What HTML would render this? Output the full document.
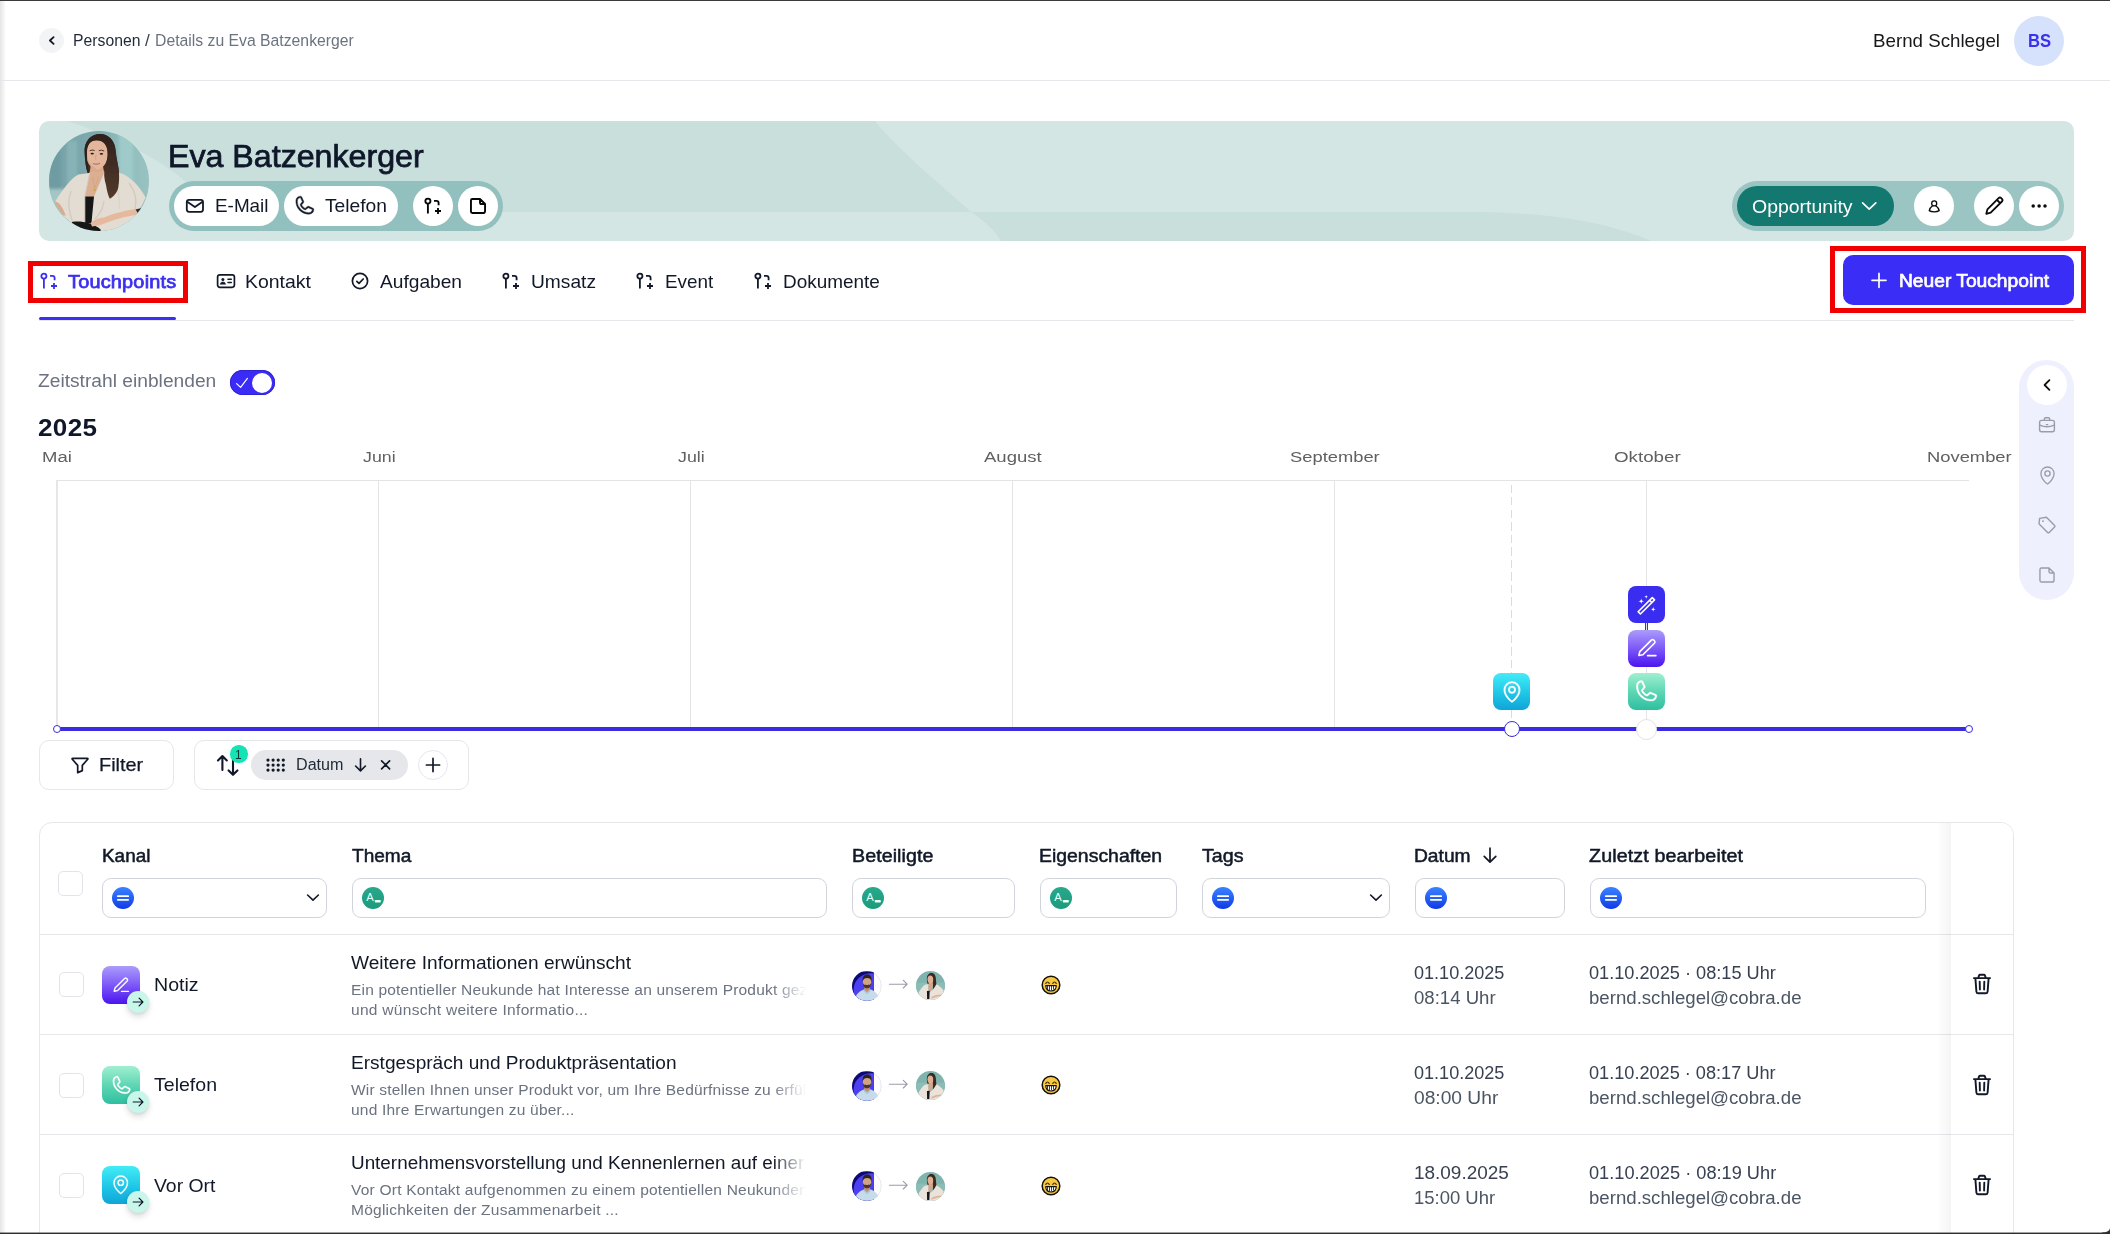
<!DOCTYPE html>
<html lang="de"><head><meta charset="utf-8"><title>Details zu Eva Batzenkerger</title>
<style>
*{box-sizing:border-box;margin:0;padding:0}
html,body{width:2110px;height:1234px;overflow:hidden;background:#fff}
body{position:relative;font-family:"Liberation Sans",sans-serif;color:#111827}
.a{position:absolute;display:block}
.t{position:absolute;white-space:nowrap;display:block}
.box{position:absolute;border:1px solid #e5e7eb;background:#fff}
.inp{position:absolute;border:1px solid #d1d5db;background:#fff;border-radius:9px;height:40px;top:878px}
.circ{position:absolute;border-radius:50%}
.cb{position:absolute;width:25px;height:25px;border:1px solid #e2e4e9;border-radius:5px;background:#fff}
.hl{position:absolute;height:1px;background:#e5e7eb}
.ic{position:absolute;border-radius:8px}
</style></head><body>
<div class="a" style="left:0;top:0;width:2110px;height:1px;background:#3a3a3a"></div>
<div class="a" style="left:0;top:1px;width:6px;height:1233px;background:linear-gradient(90deg,#e4e4e4,#fff)"></div>
<div class="hl" style="left:0;top:80px;width:2110px;background:#e5e7eb"></div>
<div class="circ" style="left:39px;top:28px;width:25px;height:25px;background:#f3f4f6"></div>
<svg class="a" style="left:39px;top:28px;" width="25" height="25" viewBox="0 0 25 25" fill="none" stroke-linecap="round" stroke-linejoin="round"><path d="M14.6 9.1 L10.9 12.5 L14.6 15.9" stroke="#111827" stroke-width="1.8"/></svg>
<span class="t" style="left:73.0px;top:33.00px;font-size:15.91px;line-height:15.91px;color:#1f2937;font-weight:400;transform-origin:0 0;transform:scaleX(0.9913)">Personen</span>
<span class="t" style="left:144.5px;top:33.00px;font-size:15.91px;line-height:15.91px;color:#374151;font-weight:400;transform-origin:0 0;transform:scaleX(1.075);letter-spacing:1.904px">/</span>
<span class="t" style="left:155.0px;top:33.00px;font-size:15.91px;line-height:15.91px;color:#6b7280;font-weight:400;transform-origin:0 0;transform:scaleX(0.9905)">Details zu Eva Batzenkerger</span>
<span class="t" style="left:1872.5px;top:32.00px;font-size:18.72px;line-height:18.72px;color:#18181b;font-weight:400;transform-origin:0 0;transform:scaleX(1.0011)">Bernd Schlegel</span>
<div class="circ" style="left:2014px;top:16px;width:50px;height:50px;background:#d6e2fb"></div>
<span class="t" style="left:2027.5px;top:33.01px;font-size:17.68px;line-height:17.68px;color:#3b2ff0;font-weight:700;transform-origin:0 0;transform:scaleX(0.9405)">BS</span>
<div class="a" style="left:39px;top:121px;width:2035px;height:120px;border-radius:10px;overflow:hidden;background:#d3e6e4">
<svg class="a" style="left:0;top:0" width="2035" height="120" viewBox="0 0 2035 120">
<path d="M28 0 H836 C860 30 900 62 932 91 H172 C150 52 95 22 28 0 Z" fill="#c8dfdc"/>
<path d="M932 91 H1440 C1520 92 1575 104 1612 120 H962 C956 110 946 100 932 91 Z" fill="#c8dfdc"/>
</svg></div>
<svg class="a" style="left:49px;top:131px;border-radius:50%" width="100" height="100" viewBox="0 0 100 100">
<defs><linearGradient id="bg1" x1="0" y1="0" x2="1" y2="0"><stop offset="0" stop-color="#76a2a8"/><stop offset=".5" stop-color="#7eaaae"/><stop offset=".72" stop-color="#8fbcbc"/><stop offset="1" stop-color="#98c2c1"/></linearGradient>
<linearGradient id="hr" x1="0" y1="0" x2="0" y2="1"><stop offset="0" stop-color="#2f211c"/><stop offset="1" stop-color="#54392b"/></linearGradient>
<filter id="bl" x="-10%" y="-10%" width="120%" height="120%"><feGaussianBlur stdDeviation="0.6"/></filter>
<filter id="bl3" x="-10%" y="-10%" width="120%" height="120%"><feGaussianBlur stdDeviation="1.6"/></filter></defs>
<rect width="100" height="100" fill="url(#bg1)"/>
<g filter="url(#bl3)">
<rect x="70" y="0" width="14" height="60" fill="#a7d2d0" opacity=".6"/>
<rect x="18" y="10" width="10" height="50" fill="#8db9bb" opacity=".7"/>
<rect x="0" y="20" width="12" height="40" fill="#6a979e" opacity=".6"/>
<rect x="-5" y="58" width="60" height="50" fill="#a9cac8" opacity=".9"/>
<rect x="55" y="60" width="50" height="50" fill="#9ac1bf" opacity=".8"/>
</g>
<g filter="url(#bl)">
<path d="M35.6 21 C35 10 42 3 50.7 3.1 C60 3.2 66 10 66.6 20 C67 30 70.5 36 70 44 C69.6 52 70 56 68.6 60 C66 66 62 69 60.6 67.6 C57 60 55 50 55 42 L38.6 42 C36.6 36 35.8 28 35.6 21Z" fill="url(#hr)"/>
<path d="M42 33 L53.6 33 L56 46 L47.5 67 L40 66 L40 46 Z" fill="#d9a98c"/>
<path d="M37.3 24 C36.8 14 41 9.5 47.5 9.5 C54.5 9.5 58.8 14 58.6 24 C58.4 32 53.5 38.6 47.6 38.6 C42.5 38.6 37.8 32 37.3 24Z" fill="#e4b79c"/>
<path d="M45.6 5.6 C38 7.6 35 14 35.7 22 C36 28 36.6 36 38.6 42 L40 41 C38.4 34 38 27 38 21 C38.2 14 41 10 46.4 8.4Z" fill="#2f211c"/>
<path d="M29.4 43.6 C22 47 12 61 6.2 70.8 C9 76 13 82 15.6 86 L21 90.6 L23 101 L92 101 C91.4 92 91.6 84 90.6 77.8 C93 74 95 70 96.6 66.4 C90 54 81 45.6 72 42.2 L56 40.6 L40.6 42 Z" fill="#e3dcd3"/>
<path d="M22 60 C18 70 20 82 24 92 M80 52 C86 60 88 70 86 78 M55 70 C54 78 50 84 46 88" stroke="#cfc7bc" stroke-width="1.4" fill="none" opacity=".8"/>
<path d="M40.8 41.6 L55.6 40.4 L45 65.8 L35.8 65.8 Z" fill="#dcae92"/>
<path d="M35.8 65.6 L45 65.4 L42.4 92.4 L35.8 92.4 Z" fill="#141418"/>
<path d="M40.8 41.6 L35.8 65.8 L35.8 92" stroke="#d2cabf" stroke-width="1" fill="none"/>
<path d="M66 52 C70 60 71 68 70 78" stroke="#d8d1c7" stroke-width="1.1" fill="none"/>
<path d="M44 7.2 C50 6 57 10 58.6 19 C59.4 25 58 30 56 36 C54.6 41 55 48 57 54 C58 60 59 64 60.8 67.8 C64 66 68 62 69.2 57 C70.4 50 70.4 44 69.6 38 C68.6 31 67.4 26 66.6 19 C65.6 9 59 3 50.7 3.1 C47 3.2 45 5 44 7.2Z" fill="url(#hr)"/>
<path d="M23 91 C31 89.6 44 91.6 51.6 98.6 L52 104 L20 104Z" fill="#141418"/>
<path d="M90.6 77.6 C80 78.6 66 82 55 86.4 C50 86.6 45 88.6 41.6 92 L43 95.4 L50 94.6 L56.6 92 C68 87.6 80 84.6 90 83.4 Z" fill="#e6b99e"/>
<path d="M6.2 70.8 C9.6 70.4 14 76 16.8 85 L13.4 83.4 C11 79.6 8 75.6 6.2 72.6Z" fill="#dcaa8e"/>
<path d="M86.6 78.4 L95 76.4 L93 82.6 L89.6 83.4Z" fill="#2b3034"/>
<ellipse cx="43.2" cy="22.6" rx="1.7" ry=".9" fill="#2a1c18"/><ellipse cx="52.4" cy="22.8" rx="1.8" ry=".9" fill="#2a1c18"/>
<path d="M40.6 19.8 q2.4 -1.4 5 -.3 M49.8 19.7 q2.8 -1.3 5.4 .4" stroke="#3a2a22" stroke-width=".9" fill="none"/>
<path d="M38.4 28 q2 7 8.6 10.2" stroke="#d2a184" stroke-width="1.2" fill="none" opacity=".7"/>
<path d="M43.8 32.4 q3.6 1.6 7.2 -.2" stroke="#b9706a" stroke-width="1.1" fill="none"/>
<path d="M47 24 q-.8 3 -.2 4.6" stroke="#cf9c80" stroke-width=".8" fill="none"/>
<path d="M43.6 46 L45.6 58 L49.6 46" stroke="#c9a064" stroke-width=".5" fill="none"/>
<circle cx="45.6" cy="59" r="1" fill="#c9a23a"/>
</g></svg>
<span class="t" style="left:167.9px;top:141.01px;font-size:31.51px;line-height:31.51px;color:#0f172a;font-weight:400;-webkit-text-stroke:0.75px #0f172a;transform-origin:0 0;transform:scaleX(1.0212)">Eva Batzenkerger</span>
<div class="a" style="left:169px;top:181px;width:334px;height:50px;border-radius:25px;background:#92c0be"></div>
<div class="a" style="left:174px;top:186px;width:105px;height:40px;border-radius:20px;background:#fff"></div>
<div class="a" style="left:284px;top:186px;width:114px;height:40px;border-radius:20px;background:#fff"></div>
<div class="circ" style="left:413px;top:186px;width:40px;height:40px;background:#fff"></div>
<div class="circ" style="left:458px;top:186px;width:40px;height:40px;background:#fff"></div>
<svg class="a" style="left:184px;top:196px;" width="22" height="20" viewBox="0 0 22 20" fill="none" stroke-linecap="round" stroke-linejoin="round"><rect x="2.8" y="3.9" width="16.2" height="11.9" rx="2.2" stroke="#111827" stroke-width="1.8"/><path d="M3.6 6 L10.9 11 L18.2 6" stroke="#111827" stroke-width="1.8"/></svg>
<span class="t" style="left:214.5px;top:197.00px;font-size:18.72px;line-height:18.72px;color:#111827;font-weight:400;transform-origin:0 0;transform:scaleX(1.0094)">E-Mail</span>
<svg class="a" style="left:293.4px;top:194.4px" width="23" height="23" viewBox="0 0 256 256"><path d="M222.37,158.46l-47.11-21.11-.13-.06a16,16,0,0,0-15.17,1.4,8.12,8.12,0,0,0-.75.56L134.87,160c-15.42-7.49-31.34-23.29-38.83-38.51l20.78-24.71c.2-.25.39-.5.57-.77a16,16,0,0,0,1.32-15.06l0-.12L97.54,33.64a16,16,0,0,0-16.62-9.52A56.26,56.26,0,0,0,32,80c0,79.400,64.600,144,144,144a56.26,56.26,0,0,0,55.880-48.920A16,16,0,0,0,222.37,158.46ZM176,208A128.14,128.14,0,0,1,48,80,40.2,40.2,0,0,1,82.87,40a.61.61,0,0,0,0,.12l21,47L83.200,111.860a6.130,6.130,0,0,0-.57.77,16,16,0,0,0-1,15.700c9.060,18.530,27.730,37.060,46.460,46.110a16,16,0,0,0,15.750-1.140,8.440,8.440,0,0,0,.74-.56L168.890,152l47,21.050h0s.08,0,.11,0A40.210,40.210,0,0,1,176,208Z" fill="#111827" stroke="#111827" stroke-width="5"/></svg>
<span class="t" style="left:324.8px;top:197.00px;font-size:18.72px;line-height:18.72px;color:#111827;font-weight:400;transform-origin:0 0;transform:scaleX(1.0280)">Telefon</span>
<svg class="a" style="left:423px;top:196px;" width="20" height="20" viewBox="0 0 20 20" fill="none" stroke-linecap="round" stroke-linejoin="round"><circle cx="4.9" cy="5.1" r="2.55" stroke="#050505" stroke-width="1.85"/><path d="M4.9 8 V17.6 M11 4.9 H13.4 Q15.6 4.9 15.6 7.1 V9.3 M12 15 H18 M15 12.1 V17.9" stroke="#050505" stroke-width="1.85" stroke-linecap="butt"/></svg>
<svg class="a" style="left:468px;top:196px;" width="20" height="20" viewBox="0 0 20 20" fill="none" stroke-linecap="round" stroke-linejoin="round"><path d="M4.4 2.95 H12 L17.05 8 V14.9 Q17.05 17.05 14.9 17.05 H4.4 Q2.95 17.05 2.95 15.6 V4.4 Q2.95 2.95 4.4 2.95 Z M12 3.2 V6.4 Q12 8 13.6 8 H16.8" stroke="#050505" stroke-width="1.9"/></svg>
<div class="a" style="left:1732px;top:181px;width:332px;height:50px;border-radius:25px;background:#9ac5c2"></div>
<div class="a" style="left:1737px;top:186px;width:157px;height:40px;border-radius:20px;background:#13786f"></div>
<span class="t" style="left:1751.6px;top:198.01px;font-size:18.72px;line-height:18.72px;color:#fff;font-weight:400;transform-origin:0 0;transform:scaleX(1.0405)">Opportunity</span>
<svg class="a" style="left:1859px;top:198px;" width="20" height="16" viewBox="0 0 20 16" fill="none" stroke-linecap="round" stroke-linejoin="round"><path d="M3.6 4.9 L10.2 11.2 L16.8 4.9" stroke="#fff" stroke-width="1.7"/></svg>
<div class="circ" style="left:1914px;top:186px;width:40px;height:40px;background:#fff"></div>
<div class="circ" style="left:1974px;top:186px;width:40px;height:40px;background:#fff"></div>
<div class="circ" style="left:2019px;top:186px;width:40px;height:40px;background:#fff"></div>
<svg class="a" style="left:1924px;top:196px;" width="20" height="20" viewBox="0 0 20 20" fill="none" stroke-linecap="round" stroke-linejoin="round"><circle cx="10.2" cy="7.4" r="2.5" stroke="#0a0a0a" stroke-width="1.3"/><path d="M8.6 9.8 C6.4 11.4 5.4 13 5.2 14.6 C7.5 16.2 12.9 16.2 15.2 14.6 C15 13 14 11.4 11.8 9.8" stroke="#0a0a0a" stroke-width="1.3"/></svg>
<svg class="a" style="left:1982px;top:194px;" width="24" height="24" viewBox="0 0 24 24" fill="none" stroke-linecap="round" stroke-linejoin="round"><path d="M4.3 19.8 L5.4 15.4 L16.6 4.2 Q17.9 2.9 19.3 4.2 L19.9 4.8 Q21.2 6.2 19.9 7.5 L8.7 18.7 Z M15 6 L18.2 9.2" stroke="#0a0a0a" stroke-width="1.8"/></svg>
<svg class="a" style="left:2029px;top:196px;" width="20" height="20" viewBox="0 0 20 20" fill="none" stroke-linecap="round" stroke-linejoin="round"><circle cx="4.2" cy="10.1" r="1.75" fill="#0a0a0a"/><circle cx="10.1" cy="10.1" r="1.75" fill="#0a0a0a"/><circle cx="16" cy="10.1" r="1.75" fill="#0a0a0a"/></svg>
<div class="a" style="left:28px;top:261px;width:160px;height:42px;border:5px solid #f00000"></div>
<svg class="a" style="left:38.5px;top:271.3px;" width="20" height="20" viewBox="0 0 20 20" fill="none" stroke-linecap="round" stroke-linejoin="round"><circle cx="4.9" cy="5.1" r="2.55" stroke="#3b2ff0" stroke-width="1.8"/><path d="M4.9 8 V17.6 M11 4.9 H13.4 Q15.6 4.9 15.6 7.1 V9.3 M12 15 H18 M15 12.1 V17.9" stroke="#3b2ff0" stroke-width="1.8" stroke-linecap="butt"/></svg>
<span class="t" style="left:68.2px;top:273.01px;font-size:18.51px;line-height:18.51px;color:#3b2ff0;font-weight:400;-webkit-text-stroke:0.75px #3b2ff0;transform-origin:0 0;transform:scaleX(1.075);letter-spacing:0.192px">Touchpoints</span>
<div class="a" style="left:39px;top:317px;width:137px;height:3px;border-radius:2px;background:#3b2ff0"></div>
<div class="hl" style="left:39px;top:320px;width:2035px;background:#e5e7eb"></div>
<svg class="a" style="left:215px;top:271px;" width="22" height="20" viewBox="0 0 22 20" fill="none" stroke-linecap="round" stroke-linejoin="round"><rect x="2.6" y="3.9" width="16.8" height="12.4" rx="2.2" stroke="#111827" stroke-width="1.7"/><circle cx="7.9" cy="8.6" r="1.5" fill="#111827"/><path d="M5.3 13 Q5.5 10.9 7.9 10.9 Q10.3 10.9 10.5 13 Z" fill="#111827" stroke="#111827" stroke-width=".6"/><path d="M13 8.2 H16.3 M13 11.6 H16.3" stroke="#111827" stroke-width="1.5"/></svg>
<span class="t" style="left:245.2px;top:273.01px;font-size:18.51px;line-height:18.51px;color:#111827;font-weight:400;transform-origin:0 0;transform:scaleX(1.0518)">Kontakt</span>
<svg class="a" style="left:349.8px;top:271.3px;" width="20" height="20" viewBox="0 0 20 20" fill="none" stroke-linecap="round" stroke-linejoin="round"><circle cx="10" cy="10" r="7.6" stroke="#111827" stroke-width="1.7"/><path d="M6.8 10.3 L9 12.4 L13.2 8" stroke="#111827" stroke-width="1.7"/></svg>
<span class="t" style="left:379.9px;top:273.01px;font-size:18.51px;line-height:18.51px;color:#111827;font-weight:400;transform-origin:0 0;transform:scaleX(1.0351)">Aufgaben</span>
<svg class="a" style="left:500.5px;top:271.3px;" width="20" height="20" viewBox="0 0 20 20" fill="none" stroke-linecap="round" stroke-linejoin="round"><circle cx="4.9" cy="5.1" r="2.55" stroke="#111827" stroke-width="1.8"/><path d="M4.9 8 V17.6 M11 4.9 H13.4 Q15.6 4.9 15.6 7.1 V9.3 M12 15 H18 M15 12.1 V17.9" stroke="#111827" stroke-width="1.8" stroke-linecap="butt"/></svg>
<span class="t" style="left:530.9px;top:273.01px;font-size:18.51px;line-height:18.51px;color:#111827;font-weight:400;transform-origin:0 0;transform:scaleX(1.0366)">Umsatz</span>
<svg class="a" style="left:634.7px;top:271.3px;" width="20" height="20" viewBox="0 0 20 20" fill="none" stroke-linecap="round" stroke-linejoin="round"><circle cx="4.9" cy="5.1" r="2.55" stroke="#111827" stroke-width="1.8"/><path d="M4.9 8 V17.6 M11 4.9 H13.4 Q15.6 4.9 15.6 7.1 V9.3 M12 15 H18 M15 12.1 V17.9" stroke="#111827" stroke-width="1.8" stroke-linecap="butt"/></svg>
<span class="t" style="left:665.4px;top:273.01px;font-size:18.51px;line-height:18.51px;color:#111827;font-weight:400;transform-origin:0 0;transform:scaleX(1.0188)">Event</span>
<svg class="a" style="left:752.5px;top:271.3px;" width="20" height="20" viewBox="0 0 20 20" fill="none" stroke-linecap="round" stroke-linejoin="round"><circle cx="4.9" cy="5.1" r="2.55" stroke="#111827" stroke-width="1.8"/><path d="M4.9 8 V17.6 M11 4.9 H13.4 Q15.6 4.9 15.6 7.1 V9.3 M12 15 H18 M15 12.1 V17.9" stroke="#111827" stroke-width="1.8" stroke-linecap="butt"/></svg>
<span class="t" style="left:782.7px;top:273.01px;font-size:18.51px;line-height:18.51px;color:#111827;font-weight:400;transform-origin:0 0;transform:scaleX(1.0232)">Dokumente</span>
<div class="a" style="left:1830px;top:246px;width:256px;height:67px;border:5px solid #f00000"></div>
<div class="a" style="left:1843px;top:255px;width:231px;height:50px;border-radius:10px;background:#3a2df5"></div>
<svg class="a" style="left:1869px;top:270px;" width="20" height="20" viewBox="0 0 20 20" fill="none" stroke-linecap="round" stroke-linejoin="round"><path d="M3 10.3 H17 M10 3.3 V17.3" stroke="#fff" stroke-width="1.7"/></svg>
<span class="t" style="left:1898.5px;top:272.00px;font-size:18.51px;line-height:18.51px;color:#fff;font-weight:400;-webkit-text-stroke:0.7px #fff;transform-origin:0 0;transform:scaleX(1.0381)">Neuer Touchpoint</span>
<span class="t" style="left:37.9px;top:373.01px;font-size:17.89px;line-height:17.89px;color:#6b7280;font-weight:400;transform-origin:0 0;transform:scaleX(1.0744)">Zeitstrahl einblenden</span>
<div class="a" style="left:230px;top:370px;width:45px;height:25px;border-radius:13px;background:#3a2cf6;box-shadow:inset 0 0 0 1px #2f23d6"></div>
<div class="circ" style="left:252px;top:373px;width:20px;height:20px;background:#fff"></div>
<svg class="a" style="left:234px;top:375px;" width="16" height="16" viewBox="0 0 16 16" fill="none" stroke-linecap="round" stroke-linejoin="round"><path d="M2.6 8.6 L6.6 12.4 L13.4 3.4" stroke="#fff" stroke-width="1.2"/></svg>
<span class="t" style="left:37.9px;top:416.00px;font-size:24.23px;line-height:24.23px;color:#0f172a;font-weight:700;transform-origin:0 0;transform:scaleX(1.075);letter-spacing:0.362px">2025</span>
<span class="t" style="left:42.0px;top:449.01px;font-size:15.29px;line-height:15.29px;color:#606060;font-weight:400;transform-origin:0 0;transform:scaleX(1.2102)">Mai</span>
<span class="t" style="left:362.6px;top:449.01px;font-size:15.29px;line-height:15.29px;color:#606060;font-weight:400;transform-origin:0 0;transform:scaleX(1.1623)">Juni</span>
<span class="t" style="left:677.6px;top:449.01px;font-size:15.29px;line-height:15.29px;color:#606060;font-weight:400;transform-origin:0 0;transform:scaleX(1.1640)">Juli</span>
<span class="t" style="left:984.1px;top:449.01px;font-size:15.29px;line-height:15.29px;color:#606060;font-weight:400;transform-origin:0 0;transform:scaleX(1.2127)">August</span>
<span class="t" style="left:1290.1px;top:449.01px;font-size:15.29px;line-height:15.29px;color:#606060;font-weight:400;transform-origin:0 0;transform:scaleX(1.2000)">September</span>
<span class="t" style="left:1613.6px;top:449.01px;font-size:15.29px;line-height:15.29px;color:#606060;font-weight:400;transform-origin:0 0;transform:scaleX(1.2270)">Oktober</span>
<span class="t" style="left:1926.6px;top:449.01px;font-size:15.29px;line-height:15.29px;color:#606060;font-weight:400;transform-origin:0 0;transform:scaleX(1.2014)">November</span>
<div class="a" style="left:56px;top:480px;width:1913px;height:1px;background:#e4e4e7"></div>
<div class="a" style="left:56px;top:480px;width:2px;height:248px;background:#e6e6ea"></div>
<div class="a" style="left:378px;top:480px;width:1px;height:248px;background:#e4e4e7"></div>
<div class="a" style="left:690px;top:480px;width:1px;height:248px;background:#e4e4e7"></div>
<div class="a" style="left:1012px;top:480px;width:1px;height:248px;background:#e4e4e7"></div>
<div class="a" style="left:1334px;top:480px;width:1px;height:248px;background:#e4e4e7"></div>
<div class="a" style="left:1646px;top:480px;width:1px;height:240px;background:#e4e4e7"></div>
<div class="a" style="left:1511px;top:485px;width:1px;height:236px;background:repeating-linear-gradient(180deg,#dcdcdc 0 8px,transparent 8px 12.5px)"></div>
<div class="a" style="left:57px;top:727px;width:1912px;height:4px;background:#3a2ce0"></div>
<div class="circ" style="left:52.5px;top:725px;width:8px;height:8px;border:1.5px solid #3a2ce0;background:#fff"></div>
<div class="circ" style="left:1965px;top:725px;width:8px;height:8px;border:1.5px solid #3a2ce0;background:#fff"></div>
<div class="circ" style="left:1503.6px;top:721px;width:16px;height:16px;border:1.8px solid #3a2ce0;background:#fff"></div>
<div class="circ" style="left:1636px;top:718.5px;width:21px;height:21px;border:1px solid #e2e2e2;background:#fff"></div>
<div class="a" style="left:1493px;top:673px;width:37px;height:37px;border-radius:8px;background:linear-gradient(180deg,#43ecf7 0%,#1fc6e6 55%,#0ea5d8 100%)"></div>
<svg class="a" style="left:1499.5px;top:679.5px" width="24" height="24" viewBox="0 0 256 256"><path d="M128,64a40,40,0,1,0,40,40A40,40,0,0,0,128,64Zm0,64a24,24,0,1,1,24-24A24,24,0,0,1,128,128Zm0-112a88.1,88.1,0,0,0-88,88c0,31.4,14.51,64.68,42,96.25a254.19,254.19,0,0,0,41.45,38.3,8,8,0,0,0,9.18,0A254.19,254.19,0,0,0,174,200.25c27.45-31.57,42-64.85,42-96.25A88.1,88.1,0,0,0,128,16Zm0,206c-16.53-13-72-60.75-72-118a72,72,0,0,1,144,0C200,161.23,144.53,209,128,222Z" fill="#fff" stroke="#fff" stroke-width="4"/></svg>
<div class="a" style="left:1628px;top:586px;width:37px;height:37px;border-radius:8px;background:#3a2df0"></div>
<svg class="a" style="left:1634.5px;top:592.5px;" width="24.0" height="24.0" viewBox="0 0 20 20" fill="none" stroke-linecap="round" stroke-linejoin="round"><path d="M2.6 15.6 L14.4 3.8 L16.3 5.7 L4.5 17.5 Z M12.2 6 L14.1 7.9" stroke="#fff" stroke-width="1.35"/><path d="M5.2 4.3 Q5.2 6.8 7.7 6.8 Q5.2 6.8 5.2 9.3 Q5.2 6.8 2.7 6.8 Q5.2 6.8 5.2 4.3Z M15.2 11.2 Q15.2 13.6 17.599999999999998 13.6 Q15.2 13.6 15.2 16.0 Q15.2 13.6 12.799999999999999 13.6 Q15.2 13.6 15.2 11.2Z M9.3 1.7000000000000002 Q9.3 3.2 10.8 3.2 Q9.3 3.2 9.3 4.7 Q9.3 3.2 7.800000000000001 3.2 Q9.3 3.2 9.3 1.7000000000000002Z" fill="#fff"/></svg>
<div class="a" style="left:1645px;top:623px;width:3px;height:7px;border-left:1px solid #3a2df0;border-right:1px solid #3a2df0"></div>
<div class="a" style="left:1628px;top:629.5px;width:37px;height:37px;border-radius:8px;background:linear-gradient(180deg,#ab9cfb 0%,#7e58f8 50%,#4a14f0 100%)"></div>
<svg class="a" style="left:1634.5px;top:636.3px;" width="24.0" height="24.0" viewBox="0 0 20 20" fill="none" stroke-linecap="round" stroke-linejoin="round"><path d="M3.2 16.2 L4 13 L13.6 3.4 Q14.6 2.4 15.6 3.4 L16.2 4 Q17.2 5 16.2 6 L6.6 15.6 Z" stroke="#fff" stroke-width="1.35"/><path d="M10.5 16.4 H17.4" stroke="#fff" stroke-width="1.35"/></svg>
<div class="a" style="left:1628px;top:673px;width:37px;height:37px;border-radius:8px;background:linear-gradient(180deg,#9ff0d0 0%,#5fd6b4 50%,#2ebfa0 100%)"></div>
<svg class="a" style="left:1633.3px;top:678.3px" width="26.4" height="26.4" viewBox="0 0 256 256"><path d="M222.37,158.46l-47.11-21.11-.13-.06a16,16,0,0,0-15.17,1.4,8.12,8.12,0,0,0-.75.56L134.87,160c-15.42-7.49-31.34-23.29-38.83-38.51l20.78-24.71c.2-.25.39-.5.57-.77a16,16,0,0,0,1.32-15.06l0-.12L97.54,33.64a16,16,0,0,0-16.62-9.52A56.26,56.26,0,0,0,32,80c0,79.400,64.600,144,144,144a56.26,56.26,0,0,0,55.880-48.920A16,16,0,0,0,222.37,158.46ZM176,208A128.14,128.14,0,0,1,48,80,40.2,40.2,0,0,1,82.87,40a.61.61,0,0,0,0,.12l21,47L83.200,111.860a6.130,6.130,0,0,0-.57.77,16,16,0,0,0-1,15.700c9.060,18.530,27.730,37.060,46.460,46.110a16,16,0,0,0,15.750-1.140,8.440,8.440,0,0,0,.74-.56L168.890,152l47,21.050h0s.08,0,.11,0A40.210,40.210,0,0,1,176,208Z" fill="#fff" stroke="#fff" stroke-width="3"/></svg>
<div class="a" style="left:2019px;top:360px;width:55px;height:240px;border-radius:28px;background:#eef0fe"></div>
<div class="circ" style="left:2027px;top:364.5px;width:40px;height:40px;background:#fff"></div>
<svg class="a" style="left:2037px;top:375px;" width="20" height="20" viewBox="0 0 20 20" fill="none" stroke-linecap="round" stroke-linejoin="round"><path d="M12.4 5.2 L7.6 10 L12.4 14.8" stroke="#111" stroke-width="1.8"/></svg>
<svg class="a" style="left:2037px;top:415px;" width="20" height="20" viewBox="0 0 20 20" fill="none" stroke-linecap="round" stroke-linejoin="round"><rect x="2.6" y="5.4" width="14.8" height="11.4" rx="2" stroke="#9a9ca6" stroke-width="1.4"/><path d="M7.3 5.2 V4.2 Q7.3 2.8 8.7 2.8 H11.3 Q12.7 2.8 12.7 4.2 V5.2 M2.8 10.2 Q10 13.4 17.2 10.2 M9.3 9.6 H10.7" stroke="#9a9ca6" stroke-width="1.4"/></svg>
<svg class="a" style="left:2036.5px;top:464.5px" width="21" height="21" viewBox="0 0 256 256"><path d="M128,64a40,40,0,1,0,40,40A40,40,0,0,0,128,64Zm0,64a24,24,0,1,1,24-24A24,24,0,0,1,128,128Zm0-112a88.1,88.1,0,0,0-88,88c0,31.4,14.51,64.68,42,96.25a254.19,254.19,0,0,0,41.45,38.3,8,8,0,0,0,9.18,0A254.19,254.19,0,0,0,174,200.25c27.45-31.57,42-64.85,42-96.25A88.1,88.1,0,0,0,128,16Zm0,206c-16.53-13-72-60.75-72-118a72,72,0,0,1,144,0C200,161.23,144.53,209,128,222Z" fill="#9a9ca6" stroke="#9a9ca6" stroke-width="0"/></svg>
<svg class="a" style="left:2037px;top:515px;" width="20" height="20" viewBox="0 0 20 20" fill="none" stroke-linecap="round" stroke-linejoin="round"><path d="M2.6 3.4 L9.4 2.2 L17.6 10.4 Q18.4 11.2 17.6 12 L12.2 17.4 Q11.4 18.2 10.6 17.4 L2.4 9.2 Q2 8.8 2.1 8.2 Z" stroke="#9a9ca6" stroke-width="1.4" transform="rotate(0 10 10)"/><circle cx="6" cy="6.2" r=".9" fill="#9a9ca6"/></svg>
<svg class="a" style="left:2037px;top:564.6px;" width="20" height="20" viewBox="0 0 20 20" fill="none" stroke-linecap="round" stroke-linejoin="round"><path d="M4.4 2.95 H12 L17.05 8 V14.9 Q17.05 17.05 14.9 17.05 H4.4 Q2.95 17.05 2.95 15.6 V4.4 Q2.95 2.95 4.4 2.95 Z M12 3.2 V6.4 Q12 8 13.6 8 H16.8" stroke="#9a9ca6" stroke-width="1.4"/></svg>
<div class="box" style="left:39px;top:740px;width:135px;height:50px;border-radius:10px"></div>
<svg class="a" style="left:69.5px;top:754.5px;" width="20" height="20" viewBox="0 0 20 20" fill="none" stroke-linecap="round" stroke-linejoin="round"><path d="M2.7 3.3 H17.3 Q18.3 3.3 17.7 4.2 L12.3 10.4 V15.6 L7.7 17.6 V10.4 L2.3 4.2 Q1.7 3.3 2.7 3.3 Z" stroke="#111827" stroke-width="1.7"/></svg>
<span class="t" style="left:99.3px;top:756.01px;font-size:18.51px;line-height:18.51px;color:#111827;font-weight:400;-webkit-text-stroke:0.25px #111827;transform-origin:0 0;transform:scaleX(1.0748)">Filter</span>
<div class="box" style="left:194px;top:740px;width:275px;height:50px;border-radius:10px"></div>
<svg class="a" style="left:216px;top:753px;" width="24" height="24" viewBox="0 0 24 24" fill="none" stroke-linecap="round" stroke-linejoin="round"><path d="M6.4 17 V3.2 M2 7.4 L6.4 3 L10.8 7.4 M17 6.6 V21.6 M12.6 17.4 L17 21.8 L21.4 17.4" stroke="#111827" stroke-width="2.1"/></svg>
<div class="circ" style="left:230px;top:745.3px;width:17.5px;height:17.5px;background:#14e3b4"></div>
<span class="t" style="left:235.0px;top:748.01px;font-size:13.0px;line-height:13.0px;color:#0b3b36;font-weight:400;transform-origin:0 0;transform:scaleX(0.9123)">1</span>
<div class="a" style="left:251px;top:750px;width:157px;height:30px;border-radius:15px;background:#e5e7eb"></div>
<svg class="a" style="left:266px;top:758px;" width="20" height="15" viewBox="0 0 20 15" fill="none" stroke-linecap="round" stroke-linejoin="round"><circle cx="2.0" cy="2.1" r="1.6" fill="#111827"/><circle cx="7.1" cy="2.1" r="1.6" fill="#111827"/><circle cx="12.2" cy="2.1" r="1.6" fill="#111827"/><circle cx="17.3" cy="2.1" r="1.6" fill="#111827"/><circle cx="2.0" cy="7.1" r="1.6" fill="#111827"/><circle cx="7.1" cy="7.1" r="1.6" fill="#111827"/><circle cx="12.2" cy="7.1" r="1.6" fill="#111827"/><circle cx="17.3" cy="7.1" r="1.6" fill="#111827"/><circle cx="2.0" cy="12.1" r="1.6" fill="#111827"/><circle cx="7.1" cy="12.1" r="1.6" fill="#111827"/><circle cx="12.2" cy="12.1" r="1.6" fill="#111827"/><circle cx="17.3" cy="12.1" r="1.6" fill="#111827"/></svg>
<span class="t" style="left:295.7px;top:757.01px;font-size:15.81px;line-height:15.81px;color:#1f2937;font-weight:400;transform-origin:0 0;transform:scaleX(1.0208)">Datum</span>
<svg class="a" style="left:352px;top:756px;" width="18" height="18" viewBox="0 0 18 18" fill="none" stroke-linecap="round" stroke-linejoin="round"><path d="M8.5 2.8 V14.8 M3.6 10 L8.5 14.9 L13.4 10" stroke="#111827" stroke-width="1.6"/></svg>
<svg class="a" style="left:377px;top:756px;" width="18" height="18" viewBox="0 0 18 18" fill="none" stroke-linecap="round" stroke-linejoin="round"><path d="M4.6 4.8 L12.6 12.8 M12.6 4.8 L4.6 12.8" stroke="#111827" stroke-width="1.7"/></svg>
<div class="circ" style="left:418px;top:750px;width:30px;height:30px;border:1px solid #e5e7eb;background:#fff"></div>
<svg class="a" style="left:423px;top:755px;" width="20" height="20" viewBox="0 0 20 20" fill="none" stroke-linecap="round" stroke-linejoin="round"><path d="M3.4 10 H16.6 M10 3.4 V16.6" stroke="#111827" stroke-width="1.7"/></svg>
<div class="a" style="left:39px;top:822px;width:1975px;height:430px;border:1px solid #e5e7eb;border-radius:13px;background:#fff"></div>
<div class="hl" style="left:40px;top:934px;width:1973px"></div>
<div class="hl" style="left:40px;top:1034px;width:1973px"></div>
<div class="hl" style="left:40px;top:1134px;width:1973px"></div>
<div class="a" style="left:1937px;top:823px;width:14px;height:411px;background:linear-gradient(90deg,rgba(0,0,0,0),rgba(0,0,0,.045))"></div>
<div class="a" style="left:1951px;top:823px;width:62px;height:411px;background:#fff;border-top-right-radius:12px"></div>
<div class="hl" style="left:1951px;top:934px;width:62px"></div>
<div class="hl" style="left:1951px;top:1034px;width:62px"></div>
<div class="hl" style="left:1951px;top:1134px;width:62px"></div>
<span class="t" style="left:101.5px;top:847.01px;font-size:18.3px;line-height:18.3px;color:#111827;font-weight:400;-webkit-text-stroke:0.5px #111827;transform-origin:0 0;transform:scaleX(1.0349)">Kanal</span>
<span class="t" style="left:351.7px;top:847.01px;font-size:18.3px;line-height:18.3px;color:#111827;font-weight:400;-webkit-text-stroke:0.5px #111827;transform-origin:0 0;transform:scaleX(1.0421)">Thema</span>
<span class="t" style="left:851.6px;top:847.01px;font-size:18.3px;line-height:18.3px;color:#111827;font-weight:400;-webkit-text-stroke:0.5px #111827;transform-origin:0 0;transform:scaleX(1.075);letter-spacing:0.056px">Beteiligte</span>
<span class="t" style="left:1039.3px;top:847.01px;font-size:18.3px;line-height:18.3px;color:#111827;font-weight:400;-webkit-text-stroke:0.5px #111827;transform-origin:0 0;transform:scaleX(1.0624)">Eigenschaften</span>
<span class="t" style="left:1201.9px;top:847.01px;font-size:18.3px;line-height:18.3px;color:#111827;font-weight:400;-webkit-text-stroke:0.5px #111827;transform-origin:0 0;transform:scaleX(1.075);letter-spacing:0.024px">Tags</span>
<span class="t" style="left:1414.3px;top:847.01px;font-size:18.3px;line-height:18.3px;color:#111827;font-weight:400;-webkit-text-stroke:0.5px #111827;transform-origin:0 0;transform:scaleX(1.0509)">Datum</span>
<svg class="a" style="left:1480px;top:845px;" width="20" height="20" viewBox="0 0 20 20" fill="none" stroke-linecap="round" stroke-linejoin="round"><path d="M10 3.2 V17 M4.2 11.4 L10 17.2 L15.8 11.4" stroke="#111827" stroke-width="1.7"/></svg>
<span class="t" style="left:1588.9px;top:847.01px;font-size:18.3px;line-height:18.3px;color:#111827;font-weight:400;-webkit-text-stroke:0.5px #111827;transform-origin:0 0;transform:scaleX(1.075);letter-spacing:0.117px">Zuletzt bearbeitet</span>
<div class="cb" style="left:58px;top:871px"></div>
<div class="inp" style="left:102px;width:225px"></div>
<div class="inp" style="left:352px;width:475px"></div>
<div class="inp" style="left:852px;width:163px"></div>
<div class="inp" style="left:1040px;width:137px"></div>
<div class="inp" style="left:1202px;width:188px"></div>
<div class="inp" style="left:1415px;width:150px"></div>
<div class="inp" style="left:1590px;width:336px"></div>
<div class="circ" style="left:112px;top:886.5px;width:22px;height:22px;background:linear-gradient(180deg,#3b82ff 0%,#2461f5 50%,#1237e6 100%)"></div><svg class="a" style="left:112px;top:886.5px;" width="22" height="22" viewBox="0 0 22 22" fill="none" stroke-linecap="round" stroke-linejoin="round"><path d="M5.8 9.2 H16.2 M5.8 12.8 H16.2" stroke="#fff" stroke-width="1.7"/></svg>
<svg class="a" style="left:306.4px;top:892px;" width="14" height="12" viewBox="0 0 14 12" fill="none" stroke-linecap="round" stroke-linejoin="round"><path d="M1.6 3 L7 8.2 L12.4 3" stroke="#111827" stroke-width="1.6"/></svg>
<div class="circ" style="left:362px;top:886.5px;width:22px;height:22px;background:linear-gradient(180deg,#27a98b 0%,#1d9a7b 100%)"></div><span class="t" style="left:366.2px;top:891.6px;font-size:11.2px;line-height:11.2px;color:#eafff8">A</span><svg class="a" style="left:362px;top:886.5px;" width="22" height="22" viewBox="0 0 22 22" fill="none" stroke-linecap="round" stroke-linejoin="round"><rect x="12.7" y="13" width="6.2" height="2.5" rx=".9" fill="#eafff8"/></svg>
<div class="circ" style="left:862px;top:886.5px;width:22px;height:22px;background:linear-gradient(180deg,#27a98b 0%,#1d9a7b 100%)"></div><span class="t" style="left:866.2px;top:891.6px;font-size:11.2px;line-height:11.2px;color:#eafff8">A</span><svg class="a" style="left:862px;top:886.5px;" width="22" height="22" viewBox="0 0 22 22" fill="none" stroke-linecap="round" stroke-linejoin="round"><rect x="12.7" y="13" width="6.2" height="2.5" rx=".9" fill="#eafff8"/></svg>
<div class="circ" style="left:1050px;top:886.5px;width:22px;height:22px;background:linear-gradient(180deg,#27a98b 0%,#1d9a7b 100%)"></div><span class="t" style="left:1054.2px;top:891.6px;font-size:11.2px;line-height:11.2px;color:#eafff8">A</span><svg class="a" style="left:1050px;top:886.5px;" width="22" height="22" viewBox="0 0 22 22" fill="none" stroke-linecap="round" stroke-linejoin="round"><rect x="12.7" y="13" width="6.2" height="2.5" rx=".9" fill="#eafff8"/></svg>
<div class="circ" style="left:1212px;top:886.5px;width:22px;height:22px;background:linear-gradient(180deg,#3b82ff 0%,#2461f5 50%,#1237e6 100%)"></div><svg class="a" style="left:1212px;top:886.5px;" width="22" height="22" viewBox="0 0 22 22" fill="none" stroke-linecap="round" stroke-linejoin="round"><path d="M5.8 9.2 H16.2 M5.8 12.8 H16.2" stroke="#fff" stroke-width="1.7"/></svg>
<svg class="a" style="left:1369.2px;top:892px;" width="14" height="12" viewBox="0 0 14 12" fill="none" stroke-linecap="round" stroke-linejoin="round"><path d="M1.6 3 L7 8.2 L12.4 3" stroke="#111827" stroke-width="1.6"/></svg>
<div class="circ" style="left:1425px;top:886.5px;width:22px;height:22px;background:linear-gradient(180deg,#3b82ff 0%,#2461f5 50%,#1237e6 100%)"></div><svg class="a" style="left:1425px;top:886.5px;" width="22" height="22" viewBox="0 0 22 22" fill="none" stroke-linecap="round" stroke-linejoin="round"><path d="M5.8 9.2 H16.2 M5.8 12.8 H16.2" stroke="#fff" stroke-width="1.7"/></svg>
<div class="circ" style="left:1600px;top:886.5px;width:22px;height:22px;background:linear-gradient(180deg,#3b82ff 0%,#2461f5 50%,#1237e6 100%)"></div><svg class="a" style="left:1600px;top:886.5px;" width="22" height="22" viewBox="0 0 22 22" fill="none" stroke-linecap="round" stroke-linejoin="round"><path d="M5.8 9.2 H16.2 M5.8 12.8 H16.2" stroke="#fff" stroke-width="1.7"/></svg>
<svg class="a" width="0" height="0"><defs><filter id="bl2" x="-10%" y="-10%" width="120%" height="120%"><feGaussianBlur stdDeviation="0.3"/></filter></defs></svg>
<div class="cb" style="left:59px;top:972px"></div>
<div class="a" style="left:102px;top:966px;width:37.5px;height:37.5px;border-radius:8px;background:linear-gradient(180deg,#ab9cfb 0%,#7e58f8 50%,#4a14f0 100%)"></div>
<svg class="a" style="left:111.2px;top:975.2px;" width="20" height="20" viewBox="0 0 20 20" fill="none" stroke-linecap="round" stroke-linejoin="round"><path d="M3.2 16.2 L4 13 L13.6 3.4 Q14.6 2.4 15.6 3.4 L16.2 4 Q17.2 5 16.2 6 L6.6 15.6 Z" stroke="#fff" stroke-width="1.4"/><path d="M10.5 16.4 H17.4" stroke="#fff" stroke-width="1.4"/></svg>
<div class="circ" style="left:127.4px;top:991px;width:22px;height:22px;background:#c9f6ea;box-shadow:0 4px 6px rgba(0,0,0,.13),0 1px 3px rgba(0,0,0,.08)"></div><svg class="a" style="left:127.4px;top:991px;" width="22" height="22" viewBox="0 0 22 22" fill="none" stroke-linecap="round" stroke-linejoin="round"><path d="M6.2 11 H15.8 M12.1 7.2 L15.9 11 L12.1 14.8" stroke="#111827" stroke-width="1.2"/></svg>
<span class="t" style="left:154.2px;top:976.01px;font-size:18.51px;line-height:18.51px;color:#111827;font-weight:400;transform-origin:0 0;transform:scaleX(1.0580)">Notiz</span>
<span class="t" style="left:351.2px;top:954.00px;font-size:18.3px;line-height:18.3px;color:#111827;font-weight:400;transform-origin:0 0;transform:scaleX(1.0451)">Weitere Informationen erwünscht</span>
<span class="t" style="left:351.4px;top:983.01px;font-size:14.46px;line-height:14.46px;color:#6b7280;font-weight:400;transform-origin:0 0;transform:scaleX(1.075);letter-spacing:0.162px">Ein potentieller Neukunde hat Interesse an unserem Produkt gez</span>
<span class="t" style="left:351.4px;top:1003.00px;font-size:14.46px;line-height:14.46px;color:#6b7280;font-weight:400;transform-origin:0 0;transform:scaleX(1.075);letter-spacing:0.259px">und wünscht weitere Informatio...</span>
<div class="a" style="left:772px;top:948px;width:36px;height:56px;background:linear-gradient(90deg,rgba(255,255,255,0),#fff 95%)"></div>
<div class="a" style="left:808px;top:948px;width:30px;height:56px;background:#fff"></div>
<svg class="a" style="left:852.3px;top:970.5px;border-radius:50%" width="29.5" height="30" viewBox="0 0 30 30">
<rect width="30" height="30" fill="#fdfdff"/>
<path d="M0 0 H22.3 V30 H0Z" fill="#0d0a72"/>
<path d="M22.3 2.4 C13 0.8 2.2 7 1.6 18 C1.4 23 3 27.6 6 30 H22.3Z" fill="#4d40f2"/>
<path d="M22.3 2.3 A14.6 14.6 0 0 1 22.3 27.7" fill="none" stroke="#e4e4ec" stroke-width=".9"/>
<g filter="url(#bl2)">
<path d="M2.4 30 C3 25 6 20.6 12.6 18.2 L18.4 18.2 C24 20 27.4 24 28 30Z" fill="#c6dcea"/>
<path d="M12.4 14 H18.2 V19 L15.3 21.4 L12.4 19Z" fill="#c1906f"/>
<path d="M12.4 18.6 L15.3 21.6 L18.2 18.6 L19 20 L15.3 23.4 L11.6 20Z" fill="#a9c6da"/>
<ellipse cx="15.3" cy="11" rx="4.3" ry="5.5" fill="#d1a283"/>
<path d="M10.8 10.6 C10.2 5.2 13 3.4 15.5 3.4 C18.4 3.4 20.4 5.4 19.8 10.6 C19.3 7.8 18 6.8 15.3 6.8 C12.6 6.8 11.3 8 10.8 10.6Z" fill="#2b211d"/>
<path d="M11 11.5 C11.1 16 13 17.4 15.3 17.4 C17.6 17.4 19.5 16 19.6 11.5 C19 13.8 17.8 14.2 16.8 13.6 L13.8 13.6 C12.8 14.2 11.6 13.8 11 11.5Z" fill="#4a362c"/>
<path d="M13.8 13.4 Q15.3 14.8 16.8 13.4Z" fill="#f3ece6"/>
</g></svg>
<svg class="a" style="left:887px;top:975px;" width="24" height="20" viewBox="0 0 24 20" fill="none" stroke-linecap="round" stroke-linejoin="round"><path d="M2.4 9.2 H20 M16.3 5.4 L20.2 9.2 L16.3 13" stroke="#9a9cab" stroke-width="1.15"/></svg>
<svg class="a" style="left:915.7px;top:970.8px;border-radius:50%" width="29" height="29" viewBox="0 0 30 30">
<rect width="30" height="30" fill="#7fb3ae"/>
<rect y="12" width="30" height="18" fill="#8cbcb6"/>
<g filter="url(#bl2)">
<path d="M11.3 9.5 C10.8 4 13.5 2 16 2 C19 2 20.6 4.6 20.6 8.5 C20.8 13 22 16 21.2 20 L17.5 20 L17.5 13 L12.2 13.5 C11.6 12 11.4 11 11.3 9.5Z" fill="#3a2a23"/>
<path d="M13.3 11 H17.3 L17.5 15 L15.5 21 H13 L12.8 15Z" fill="#d6a588"/>
<ellipse cx="15" cy="8.6" rx="3.1" ry="4" fill="#e0b094"/>
<path d="M14 2.6 C18 1.6 19.6 5 19.4 8.6 C19.4 12 20.6 16 21 19.5 C19 21 18 19 17.8 16 C17.5 12 18.3 10 17.8 7.6 C17.2 5 16 4 14 3.6Z" fill="#3a2a23"/>
<path d="M10 14 C7 15 4 20 2.5 23 L5.5 28 L7 31 H26.5 C27 27 27.4 24 28.8 20.5 C26.5 17 23.5 14.6 21 13.6 C19.6 16 18 19.5 14.5 21.6 L13 21 C12.6 18 12.6 16 12.8 13.6Z" fill="#e9e3db"/>
<path d="M11.3 20.6 L14.2 20.4 L13.8 29 L11.5 29Z" fill="#16161a"/>
<path d="M16.5 26.6 C19 25 23 24.4 26 24.3 L26 25.8 C23 26 20 27 18 28 L15 28.6Z" fill="#e2b397"/>
</g></svg>
<svg class="a" style="left:1041px;top:975px;" width="20" height="20" viewBox="0 0 20 20" fill="none" stroke-linecap="round" stroke-linejoin="round"><circle cx="10" cy="10" r="8.8" fill="#f8c840" stroke="#14110a" stroke-width="1.5"/><path d="M4.8 8.4 Q6.5 5.6 8.2 8.4 M11.8 8.4 Q13.5 5.6 15.2 8.4" stroke="#3a2a08" stroke-width="1.2"/><path d="M4.7 10.6 H15.3 Q15 15.9 10 16 Q5 15.9 4.7 10.6Z" fill="#fff" stroke="#14110a" stroke-width="1.1"/><path d="M6.50 10.8 V14.4" stroke="#1b1b1b" stroke-width=".85" stroke-linecap="butt"/><path d="M8.50 10.8 V15.4" stroke="#1b1b1b" stroke-width=".85" stroke-linecap="butt"/><path d="M10.50 10.8 V15.4" stroke="#1b1b1b" stroke-width=".85" stroke-linecap="butt"/><path d="M12.50 10.8 V14.4" stroke="#1b1b1b" stroke-width=".85" stroke-linecap="butt"/></svg>
<span class="t" style="left:1414.4px;top:964.00px;font-size:18.3px;line-height:18.3px;color:#374151;font-weight:400;transform-origin:0 0;transform:scaleX(0.9880)">01.10.2025</span>
<span class="t" style="left:1414.4px;top:989.01px;font-size:18.3px;line-height:18.3px;color:#4b5563;font-weight:400;transform-origin:0 0;transform:scaleX(1.0162)">08:14 Uhr</span>
<span class="t" style="left:1588.9px;top:964.00px;font-size:18.3px;line-height:18.3px;color:#374151;font-weight:400;transform-origin:0 0;transform:scaleX(0.9935)">01.10.2025 · 08:15 Uhr</span>
<span class="t" style="left:1588.9px;top:989.01px;font-size:18.3px;line-height:18.3px;color:#4b5563;font-weight:400;transform-origin:0 0;transform:scaleX(1.0186)">bernd.schlegel@cobra.de</span>
<svg class="a" style="left:1972.3px;top:972.3px;" width="20" height="24" viewBox="0 0 20 24" fill="none" stroke-linecap="round" stroke-linejoin="round"><path d="M1.9 6.1 H18.1 M6.3 5.8 L7 3.6 Q7.3 2.8 8.2 2.8 H11.8 Q12.7 2.8 13 3.6 L13.7 5.8 M3.4 6.4 L4.4 19.6 Q4.6 21.3 6.3 21.3 H13.7 Q15.4 21.3 15.6 19.6 L16.6 6.4 M7.7 9.6 L7.9 17.6 M12.3 9.6 L12.1 17.6" stroke="#111827" stroke-width="1.9"/></svg>
<div class="cb" style="left:59px;top:1073px"></div>
<div class="a" style="left:102px;top:1066px;width:37.5px;height:37.5px;border-radius:8px;background:linear-gradient(180deg,#9ff0d0 0%,#5fd6b4 50%,#2ebfa0 100%)"></div>
<svg class="a" style="left:109.5px;top:1073.5px" width="22.5" height="22.5" viewBox="0 0 256 256"><path d="M222.37,158.46l-47.11-21.11-.13-.06a16,16,0,0,0-15.17,1.4,8.12,8.12,0,0,0-.75.56L134.87,160c-15.42-7.49-31.34-23.29-38.83-38.51l20.78-24.71c.2-.25.39-.5.57-.77a16,16,0,0,0,1.32-15.06l0-.12L97.54,33.64a16,16,0,0,0-16.62-9.52A56.26,56.26,0,0,0,32,80c0,79.400,64.600,144,144,144a56.26,56.26,0,0,0,55.880-48.920A16,16,0,0,0,222.37,158.46ZM176,208A128.14,128.14,0,0,1,48,80,40.2,40.2,0,0,1,82.87,40a.61.61,0,0,0,0,.12l21,47L83.200,111.860a6.130,6.130,0,0,0-.57.77,16,16,0,0,0-1,15.700c9.060,18.530,27.730,37.060,46.460,46.110a16,16,0,0,0,15.750-1.140,8.440,8.440,0,0,0,.74-.56L168.890,152l47,21.050h0s.08,0,.11,0A40.210,40.210,0,0,1,176,208Z" fill="#fff" stroke="#fff" stroke-width="3"/></svg>
<div class="circ" style="left:127.4px;top:1091px;width:22px;height:22px;background:#c9f6ea;box-shadow:0 4px 6px rgba(0,0,0,.13),0 1px 3px rgba(0,0,0,.08)"></div><svg class="a" style="left:127.4px;top:1091px;" width="22" height="22" viewBox="0 0 22 22" fill="none" stroke-linecap="round" stroke-linejoin="round"><path d="M6.2 11 H15.8 M12.1 7.2 L15.9 11 L12.1 14.8" stroke="#111827" stroke-width="1.2"/></svg>
<span class="t" style="left:154.2px;top:1076.01px;font-size:18.51px;line-height:18.51px;color:#111827;font-weight:400;transform-origin:0 0;transform:scaleX(1.0561)">Telefon</span>
<span class="t" style="left:351.2px;top:1054.00px;font-size:18.3px;line-height:18.3px;color:#111827;font-weight:400;transform-origin:0 0;transform:scaleX(1.0433)">Erstgespräch und Produktpräsentation</span>
<span class="t" style="left:351.4px;top:1083.01px;font-size:14.46px;line-height:14.46px;color:#6b7280;font-weight:400;transform-origin:0 0;transform:scaleX(1.075);letter-spacing:0.153px">Wir stellen Ihnen unser Produkt vor, um Ihre Bedürfnisse zu erfül</span>
<span class="t" style="left:351.4px;top:1103.00px;font-size:14.46px;line-height:14.46px;color:#6b7280;font-weight:400;transform-origin:0 0;transform:scaleX(1.075);letter-spacing:0.178px">und Ihre Erwartungen zu über...</span>
<div class="a" style="left:772px;top:1048px;width:36px;height:56px;background:linear-gradient(90deg,rgba(255,255,255,0),#fff 95%)"></div>
<div class="a" style="left:808px;top:1048px;width:30px;height:56px;background:#fff"></div>
<svg class="a" style="left:852.3px;top:1070.9px;border-radius:50%" width="29.5" height="30" viewBox="0 0 30 30">
<rect width="30" height="30" fill="#fdfdff"/>
<path d="M0 0 H22.3 V30 H0Z" fill="#0d0a72"/>
<path d="M22.3 2.4 C13 0.8 2.2 7 1.6 18 C1.4 23 3 27.6 6 30 H22.3Z" fill="#4d40f2"/>
<path d="M22.3 2.3 A14.6 14.6 0 0 1 22.3 27.7" fill="none" stroke="#e4e4ec" stroke-width=".9"/>
<g filter="url(#bl2)">
<path d="M2.4 30 C3 25 6 20.6 12.6 18.2 L18.4 18.2 C24 20 27.4 24 28 30Z" fill="#c6dcea"/>
<path d="M12.4 14 H18.2 V19 L15.3 21.4 L12.4 19Z" fill="#c1906f"/>
<path d="M12.4 18.6 L15.3 21.6 L18.2 18.6 L19 20 L15.3 23.4 L11.6 20Z" fill="#a9c6da"/>
<ellipse cx="15.3" cy="11" rx="4.3" ry="5.5" fill="#d1a283"/>
<path d="M10.8 10.6 C10.2 5.2 13 3.4 15.5 3.4 C18.4 3.4 20.4 5.4 19.8 10.6 C19.3 7.8 18 6.8 15.3 6.8 C12.6 6.8 11.3 8 10.8 10.6Z" fill="#2b211d"/>
<path d="M11 11.5 C11.1 16 13 17.4 15.3 17.4 C17.6 17.4 19.5 16 19.6 11.5 C19 13.8 17.8 14.2 16.8 13.6 L13.8 13.6 C12.8 14.2 11.6 13.8 11 11.5Z" fill="#4a362c"/>
<path d="M13.8 13.4 Q15.3 14.8 16.8 13.4Z" fill="#f3ece6"/>
</g></svg>
<svg class="a" style="left:887px;top:1075.4px;" width="24" height="20" viewBox="0 0 24 20" fill="none" stroke-linecap="round" stroke-linejoin="round"><path d="M2.4 9.2 H20 M16.3 5.4 L20.2 9.2 L16.3 13" stroke="#9a9cab" stroke-width="1.15"/></svg>
<svg class="a" style="left:915.7px;top:1071.2px;border-radius:50%" width="29" height="29" viewBox="0 0 30 30">
<rect width="30" height="30" fill="#7fb3ae"/>
<rect y="12" width="30" height="18" fill="#8cbcb6"/>
<g filter="url(#bl2)">
<path d="M11.3 9.5 C10.8 4 13.5 2 16 2 C19 2 20.6 4.6 20.6 8.5 C20.8 13 22 16 21.2 20 L17.5 20 L17.5 13 L12.2 13.5 C11.6 12 11.4 11 11.3 9.5Z" fill="#3a2a23"/>
<path d="M13.3 11 H17.3 L17.5 15 L15.5 21 H13 L12.8 15Z" fill="#d6a588"/>
<ellipse cx="15" cy="8.6" rx="3.1" ry="4" fill="#e0b094"/>
<path d="M14 2.6 C18 1.6 19.6 5 19.4 8.6 C19.4 12 20.6 16 21 19.5 C19 21 18 19 17.8 16 C17.5 12 18.3 10 17.8 7.6 C17.2 5 16 4 14 3.6Z" fill="#3a2a23"/>
<path d="M10 14 C7 15 4 20 2.5 23 L5.5 28 L7 31 H26.5 C27 27 27.4 24 28.8 20.5 C26.5 17 23.5 14.6 21 13.6 C19.6 16 18 19.5 14.5 21.6 L13 21 C12.6 18 12.6 16 12.8 13.6Z" fill="#e9e3db"/>
<path d="M11.3 20.6 L14.2 20.4 L13.8 29 L11.5 29Z" fill="#16161a"/>
<path d="M16.5 26.6 C19 25 23 24.4 26 24.3 L26 25.8 C23 26 20 27 18 28 L15 28.6Z" fill="#e2b397"/>
</g></svg>
<svg class="a" style="left:1041px;top:1075px;" width="20" height="20" viewBox="0 0 20 20" fill="none" stroke-linecap="round" stroke-linejoin="round"><circle cx="10" cy="10" r="8.8" fill="#f8c840" stroke="#14110a" stroke-width="1.5"/><path d="M4.8 8.4 Q6.5 5.6 8.2 8.4 M11.8 8.4 Q13.5 5.6 15.2 8.4" stroke="#3a2a08" stroke-width="1.2"/><path d="M4.7 10.6 H15.3 Q15 15.9 10 16 Q5 15.9 4.7 10.6Z" fill="#fff" stroke="#14110a" stroke-width="1.1"/><path d="M6.50 10.8 V14.4" stroke="#1b1b1b" stroke-width=".85" stroke-linecap="butt"/><path d="M8.50 10.8 V15.4" stroke="#1b1b1b" stroke-width=".85" stroke-linecap="butt"/><path d="M10.50 10.8 V15.4" stroke="#1b1b1b" stroke-width=".85" stroke-linecap="butt"/><path d="M12.50 10.8 V14.4" stroke="#1b1b1b" stroke-width=".85" stroke-linecap="butt"/></svg>
<span class="t" style="left:1414.4px;top:1064.00px;font-size:18.3px;line-height:18.3px;color:#374151;font-weight:400;transform-origin:0 0;transform:scaleX(0.9880)">01.10.2025</span>
<span class="t" style="left:1414.4px;top:1089.01px;font-size:18.3px;line-height:18.3px;color:#4b5563;font-weight:400;transform-origin:0 0;transform:scaleX(1.0499)">08:00 Uhr</span>
<span class="t" style="left:1588.9px;top:1064.00px;font-size:18.3px;line-height:18.3px;color:#374151;font-weight:400;transform-origin:0 0;transform:scaleX(0.9919)">01.10.2025 · 08:17 Uhr</span>
<span class="t" style="left:1588.9px;top:1089.01px;font-size:18.3px;line-height:18.3px;color:#4b5563;font-weight:400;transform-origin:0 0;transform:scaleX(1.0186)">bernd.schlegel@cobra.de</span>
<svg class="a" style="left:1972.3px;top:1072.7px;" width="20" height="24" viewBox="0 0 20 24" fill="none" stroke-linecap="round" stroke-linejoin="round"><path d="M1.9 6.1 H18.1 M6.3 5.8 L7 3.6 Q7.3 2.8 8.2 2.8 H11.8 Q12.7 2.8 13 3.6 L13.7 5.8 M3.4 6.4 L4.4 19.6 Q4.6 21.3 6.3 21.3 H13.7 Q15.4 21.3 15.6 19.6 L16.6 6.4 M7.7 9.6 L7.9 17.6 M12.3 9.6 L12.1 17.6" stroke="#111827" stroke-width="1.9"/></svg>
<div class="cb" style="left:59px;top:1173px"></div>
<div class="a" style="left:102px;top:1166px;width:37.5px;height:37.5px;border-radius:8px;background:linear-gradient(180deg,#43ecf7 0%,#1fc6e6 55%,#0ea5d8 100%)"></div>
<svg class="a" style="left:110px;top:1174px" width="21.5" height="21.5" viewBox="0 0 256 256"><path d="M128,64a40,40,0,1,0,40,40A40,40,0,0,0,128,64Zm0,64a24,24,0,1,1,24-24A24,24,0,0,1,128,128Zm0-112a88.1,88.1,0,0,0-88,88c0,31.4,14.51,64.68,42,96.25a254.19,254.19,0,0,0,41.45,38.3,8,8,0,0,0,9.18,0A254.19,254.19,0,0,0,174,200.25c27.45-31.57,42-64.85,42-96.25A88.1,88.1,0,0,0,128,16Zm0,206c-16.53-13-72-60.75-72-118a72,72,0,0,1,144,0C200,161.23,144.53,209,128,222Z" fill="#fff" stroke="#fff" stroke-width="2"/></svg>
<div class="circ" style="left:127.4px;top:1191px;width:22px;height:22px;background:#c9f6ea;box-shadow:0 4px 6px rgba(0,0,0,.13),0 1px 3px rgba(0,0,0,.08)"></div><svg class="a" style="left:127.4px;top:1191px;" width="22" height="22" viewBox="0 0 22 22" fill="none" stroke-linecap="round" stroke-linejoin="round"><path d="M6.2 11 H15.8 M12.1 7.2 L15.9 11 L12.1 14.8" stroke="#111827" stroke-width="1.2"/></svg>
<span class="t" style="left:154.2px;top:1177.01px;font-size:18.51px;line-height:18.51px;color:#111827;font-weight:400;transform-origin:0 0;transform:scaleX(1.0476)">Vor Ort</span>
<span class="t" style="left:351.2px;top:1154.00px;font-size:18.3px;line-height:18.3px;color:#111827;font-weight:400;transform-origin:0 0;transform:scaleX(1.0322)">Unternehmensvorstellung und Kennenlernen auf einer</span>
<span class="t" style="left:351.4px;top:1183.01px;font-size:14.46px;line-height:14.46px;color:#6b7280;font-weight:400;transform-origin:0 0;transform:scaleX(1.075);letter-spacing:0.192px">Vor Ort Kontakt aufgenommen zu einem potentiellen Neukunden</span>
<span class="t" style="left:351.4px;top:1203.00px;font-size:14.46px;line-height:14.46px;color:#6b7280;font-weight:400;transform-origin:0 0;transform:scaleX(1.075);letter-spacing:0.206px">Möglichkeiten der Zusammenarbeit ...</span>
<div class="a" style="left:772px;top:1148px;width:36px;height:56px;background:linear-gradient(90deg,rgba(255,255,255,0),#fff 95%)"></div>
<div class="a" style="left:808px;top:1148px;width:30px;height:56px;background:#fff"></div>
<svg class="a" style="left:852.3px;top:1171.4px;border-radius:50%" width="29.5" height="30" viewBox="0 0 30 30">
<rect width="30" height="30" fill="#fdfdff"/>
<path d="M0 0 H22.3 V30 H0Z" fill="#0d0a72"/>
<path d="M22.3 2.4 C13 0.8 2.2 7 1.6 18 C1.4 23 3 27.6 6 30 H22.3Z" fill="#4d40f2"/>
<path d="M22.3 2.3 A14.6 14.6 0 0 1 22.3 27.7" fill="none" stroke="#e4e4ec" stroke-width=".9"/>
<g filter="url(#bl2)">
<path d="M2.4 30 C3 25 6 20.6 12.6 18.2 L18.4 18.2 C24 20 27.4 24 28 30Z" fill="#c6dcea"/>
<path d="M12.4 14 H18.2 V19 L15.3 21.4 L12.4 19Z" fill="#c1906f"/>
<path d="M12.4 18.6 L15.3 21.6 L18.2 18.6 L19 20 L15.3 23.4 L11.6 20Z" fill="#a9c6da"/>
<ellipse cx="15.3" cy="11" rx="4.3" ry="5.5" fill="#d1a283"/>
<path d="M10.8 10.6 C10.2 5.2 13 3.4 15.5 3.4 C18.4 3.4 20.4 5.4 19.8 10.6 C19.3 7.8 18 6.8 15.3 6.8 C12.6 6.8 11.3 8 10.8 10.6Z" fill="#2b211d"/>
<path d="M11 11.5 C11.1 16 13 17.4 15.3 17.4 C17.6 17.4 19.5 16 19.6 11.5 C19 13.8 17.8 14.2 16.8 13.6 L13.8 13.6 C12.8 14.2 11.6 13.8 11 11.5Z" fill="#4a362c"/>
<path d="M13.8 13.4 Q15.3 14.8 16.8 13.4Z" fill="#f3ece6"/>
</g></svg>
<svg class="a" style="left:887px;top:1175.9px;" width="24" height="20" viewBox="0 0 24 20" fill="none" stroke-linecap="round" stroke-linejoin="round"><path d="M2.4 9.2 H20 M16.3 5.4 L20.2 9.2 L16.3 13" stroke="#9a9cab" stroke-width="1.15"/></svg>
<svg class="a" style="left:915.7px;top:1171.7px;border-radius:50%" width="29" height="29" viewBox="0 0 30 30">
<rect width="30" height="30" fill="#7fb3ae"/>
<rect y="12" width="30" height="18" fill="#8cbcb6"/>
<g filter="url(#bl2)">
<path d="M11.3 9.5 C10.8 4 13.5 2 16 2 C19 2 20.6 4.6 20.6 8.5 C20.8 13 22 16 21.2 20 L17.5 20 L17.5 13 L12.2 13.5 C11.6 12 11.4 11 11.3 9.5Z" fill="#3a2a23"/>
<path d="M13.3 11 H17.3 L17.5 15 L15.5 21 H13 L12.8 15Z" fill="#d6a588"/>
<ellipse cx="15" cy="8.6" rx="3.1" ry="4" fill="#e0b094"/>
<path d="M14 2.6 C18 1.6 19.6 5 19.4 8.6 C19.4 12 20.6 16 21 19.5 C19 21 18 19 17.8 16 C17.5 12 18.3 10 17.8 7.6 C17.2 5 16 4 14 3.6Z" fill="#3a2a23"/>
<path d="M10 14 C7 15 4 20 2.5 23 L5.5 28 L7 31 H26.5 C27 27 27.4 24 28.8 20.5 C26.5 17 23.5 14.6 21 13.6 C19.6 16 18 19.5 14.5 21.6 L13 21 C12.6 18 12.6 16 12.8 13.6Z" fill="#e9e3db"/>
<path d="M11.3 20.6 L14.2 20.4 L13.8 29 L11.5 29Z" fill="#16161a"/>
<path d="M16.5 26.6 C19 25 23 24.4 26 24.3 L26 25.8 C23 26 20 27 18 28 L15 28.6Z" fill="#e2b397"/>
</g></svg>
<svg class="a" style="left:1041px;top:1176px;" width="20" height="20" viewBox="0 0 20 20" fill="none" stroke-linecap="round" stroke-linejoin="round"><circle cx="10" cy="10" r="8.8" fill="#f8c840" stroke="#14110a" stroke-width="1.5"/><path d="M4.8 8.4 Q6.5 5.6 8.2 8.4 M11.8 8.4 Q13.5 5.6 15.2 8.4" stroke="#3a2a08" stroke-width="1.2"/><path d="M4.7 10.6 H15.3 Q15 15.9 10 16 Q5 15.9 4.7 10.6Z" fill="#fff" stroke="#14110a" stroke-width="1.1"/><path d="M6.50 10.8 V14.4" stroke="#1b1b1b" stroke-width=".85" stroke-linecap="butt"/><path d="M8.50 10.8 V15.4" stroke="#1b1b1b" stroke-width=".85" stroke-linecap="butt"/><path d="M10.50 10.8 V15.4" stroke="#1b1b1b" stroke-width=".85" stroke-linecap="butt"/><path d="M12.50 10.8 V14.4" stroke="#1b1b1b" stroke-width=".85" stroke-linecap="butt"/></svg>
<span class="t" style="left:1414.4px;top:1164.00px;font-size:18.3px;line-height:18.3px;color:#374151;font-weight:400;transform-origin:0 0;transform:scaleX(1.0361)">18.09.2025</span>
<span class="t" style="left:1414.4px;top:1189.01px;font-size:18.3px;line-height:18.3px;color:#4b5563;font-weight:400;transform-origin:0 0;transform:scaleX(1.0100)">15:00 Uhr</span>
<span class="t" style="left:1588.9px;top:1164.00px;font-size:18.3px;line-height:18.3px;color:#374151;font-weight:400;transform-origin:0 0;transform:scaleX(0.9956)">01.10.2025 · 08:19 Uhr</span>
<span class="t" style="left:1588.9px;top:1189.01px;font-size:18.3px;line-height:18.3px;color:#4b5563;font-weight:400;transform-origin:0 0;transform:scaleX(1.0186)">bernd.schlegel@cobra.de</span>
<svg class="a" style="left:1972.3px;top:1173.2px;" width="20" height="24" viewBox="0 0 20 24" fill="none" stroke-linecap="round" stroke-linejoin="round"><path d="M1.9 6.1 H18.1 M6.3 5.8 L7 3.6 Q7.3 2.8 8.2 2.8 H11.8 Q12.7 2.8 13 3.6 L13.7 5.8 M3.4 6.4 L4.4 19.6 Q4.6 21.3 6.3 21.3 H13.7 Q15.4 21.3 15.6 19.6 L16.6 6.4 M7.7 9.6 L7.9 17.6 M12.3 9.6 L12.1 17.6" stroke="#111827" stroke-width="1.9"/></svg>
<div class="a" style="left:0;top:1233px;width:2110px;height:1px;background:#2e2e2e"></div>
<div class="a" style="left:0;top:1232px;width:2110px;height:1px;background:rgba(50,50,50,.45)"></div>
<svg class="a" style="left:2102px;top:1228px" width="8" height="6" viewBox="0 0 8 6"><path d="M8 0 Q7.6 4.4 0 4.6 L0 6 L8 6Z" fill="#2e2e2e"/></svg>
</body></html>
